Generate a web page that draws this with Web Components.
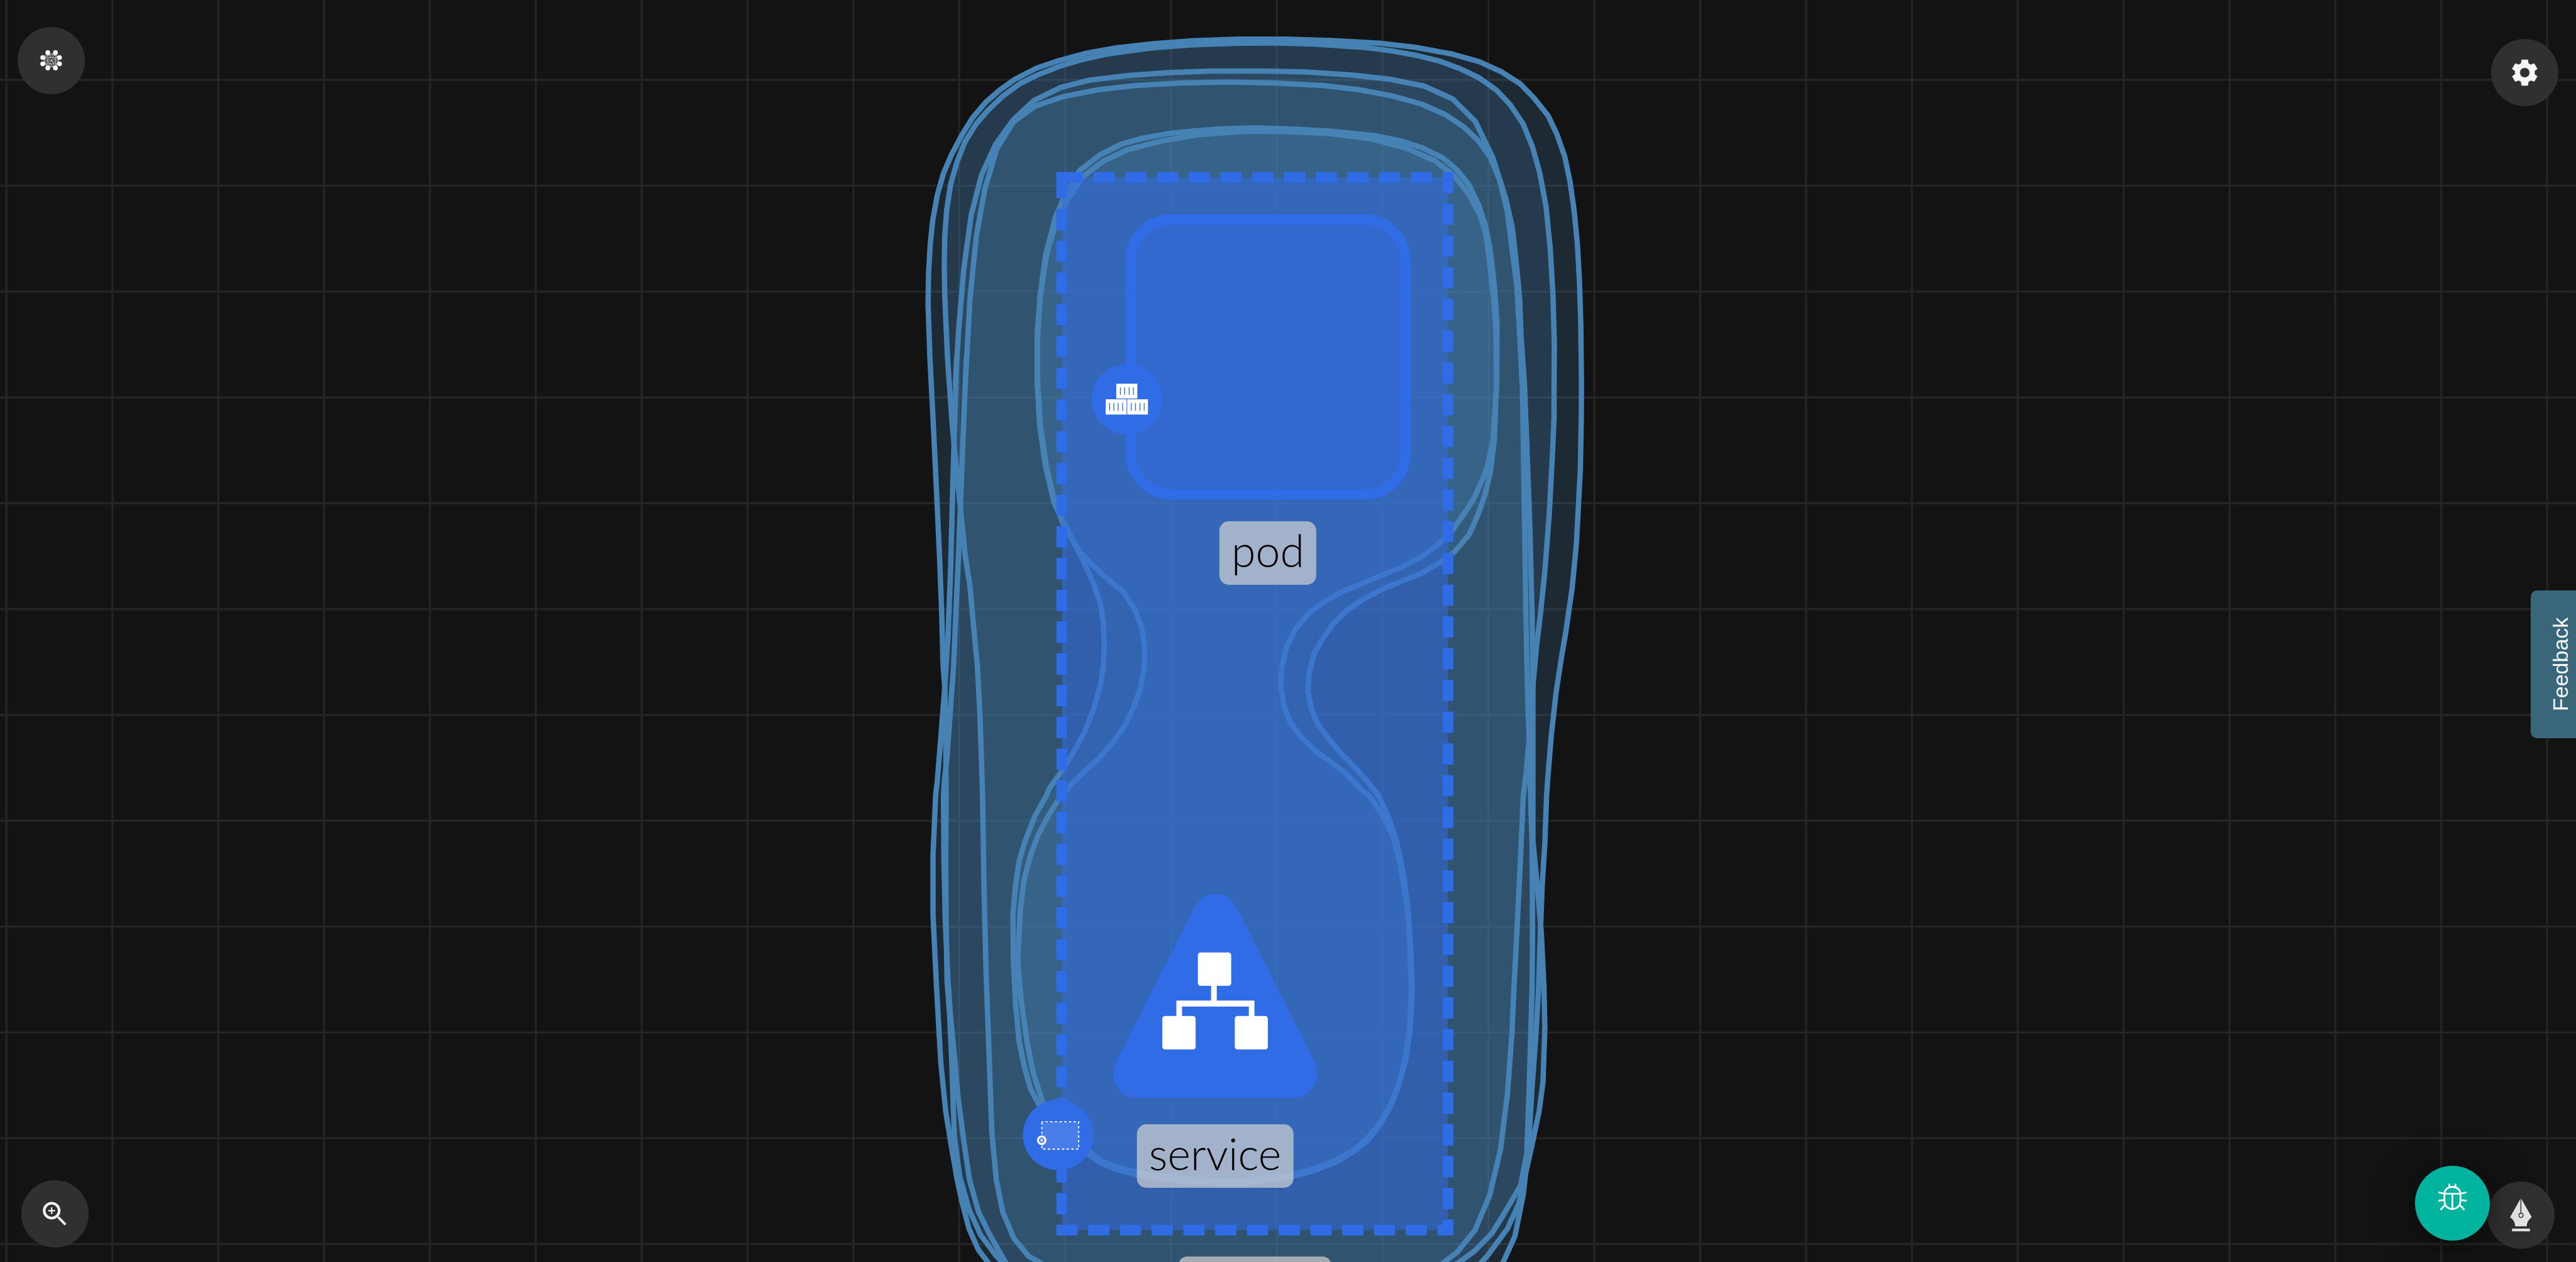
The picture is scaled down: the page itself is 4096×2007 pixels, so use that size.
<!DOCTYPE html>
<html lang="en">
<head>
<meta charset="utf-8">
<title>Cluster designer</title>
<style>
html, body { margin: 0; height: 100%; background: #131313; }
</style>
</head>
<body>
<designer-app></designer-app>

<template id="t-app">
<style>
:host { display: block; position: relative; height: 100vh; overflow: hidden; background: #131313; font-family: "Liberation Sans", Arial, sans-serif; }
.controls { position: absolute; inset: 0; display: flex; flex-direction: column; justify-content: space-between; box-sizing: border-box; padding: 43px 28px 21px; }
.row { display: flex; justify-content: space-between; align-items: flex-start; }
.row.bottom { align-items: flex-end; padding: 0 6px; }
.group { display: flex; align-items: flex-end; }
.settings { margin-top: 19px; }
.zoom { margin-bottom: 2px; }
.bug { margin: 0 -4px 13px 0; z-index: 1; }
feedback-tab { position: absolute; right: 0; top: 939px; }
</style>
<graph-canvas></graph-canvas>
<div class="controls">
  <div class="row">
    <round-button label="Layout">
      <svg class="mesh" viewBox="117 180 450 450"></svg>
    </round-button>
    <round-button class="settings" label="Settings">
      <svg viewBox="213 141 450 450"><path fill="#f5f7f7" fill-rule="evenodd" stroke="#f5f7f7" stroke-width="2" stroke-linejoin="round" d="M417 280H459L462 304Q470 308 478 313L501 305L522 341L503 356Q505 366 503 376L522 391L501 426L478 418Q470 424 462 427L459 452H417L414 427Q406 424 398 418L375 426L354 391L374 376Q372 366 374 356L354 341L375 305L398 313Q406 308 414 304ZM438 333A33 33 0 1 0 438 399A33 33 0 1 0 438 333Z"/></svg>
    </round-button>
  </div>
  <div class="row bottom">
    <round-button class="zoom" label="Zoom in">
      <svg viewBox="144 170 450 450" fill="none" stroke="#f5f7f7"><circle cx="346.500" cy="373.500" r="50" stroke-width="17.500"/><path stroke-width="9" d="M324 373.500H369M346.500 351V396"/><path fill="#f5f7f7" stroke="none" d="M387 414H399L445 461L433 472L387 426Z"/></svg>
    </round-button>
    <div class="group">
      <round-button class="bug" label="Report a bug" kind="accent">
        <svg viewBox="180 141 504 504" fill="none" stroke="#fff" stroke-width="12"><path d="M378 331V374C378 410 401 432 432 432S486 410 486 374V331C486 302 463 283 432 283S378 302 378 331Z"/><path d="M378 329H486M432 329V432M411.500 262V286M452.500 262V286M338 320L378 329M526 320L486 329M337 377L378 371M527 377L486 371M351 438L385 403M513 438L479 403"/></svg>
      </round-button>
      <round-button label="Design">
        <svg viewBox="666 249 450 450"><path fill="#e6e6e6" d="M887 366H894L963 488Q932 508 929 549H852Q850 508 818 488Z"/><path fill="#e6e3e6" d="M831 564H951V582H831Z"/><path stroke="#303030" stroke-width="6" d="M890.500 366V460"/><circle cx="891" cy="475.500" r="14" fill="#e6e6e6" stroke="#303030" stroke-width="6"/></svg>
      </round-button>
    </div>
  </div>
</div>
<feedback-tab>Feedback</feedback-tab>
</template>

<template id="t-button">
<style>
:host { display: block; flex: none; --size: 107px; --fill: #303030; --shadow: none; }
:host([kind="accent"]) { --size: 119px; --fill: #00b39f; --shadow: 0 6px 70px rgba(0, 0, 0, .45), 0 4px 16px rgba(0, 0, 0, .25); }
button { display: flex; width: var(--size); height: var(--size); padding: 0; border: 0; border-radius: 50%; background: var(--fill); box-shadow: var(--shadow); cursor: pointer; }
::slotted(svg) { display: block; width: 100%; height: 100%; }
</style>
<button type="button"><slot></slot></button>
</template>

<template id="t-feedback">
<style>
:host { display: block; }
button { display: flex; align-items: center; justify-content: center; box-sizing: border-box; width: 72px; height: 235px; padding: 0; border: 0; border-radius: 0 10px 10px 0; background: #396679; color: #f5f7f7; font: 34px/40px "Liberation Sans", Arial, sans-serif; writing-mode: vertical-rl; transform: rotate(180deg); cursor: pointer; }
span { display: block; margin-right: 22px; }
</style>
<button type="button"><span><slot></slot></span></button>
</template>

<template id="t-label">
<style>
:host { display: flex; align-items: center; justify-content: center; box-sizing: border-box; height: 101px; padding: 0 19px 8px; border-radius: 15px; background: rgba(211, 211, 211, .7); color: #000; font: 300 70px/92px Lato, "Open Sans", sans-serif; white-space: nowrap; }
</style>
<slot></slot>
</template>

<template id="t-canvas">
<style>
:host { display: block; position: relative; overflow: hidden; }
svg { display: block; width: 100%; height: auto; }
.hull { fill: #4682b4; fill-opacity: .2; stroke: #4682b4; stroke-width: 12; stroke-linejoin: round; }
node-label { position: absolute; transform: translateX(-50%); }
.pod { left: 49.22%; top: 41.28%; }
.service { left: 47.17%; top: 89.05%; }
</style>
<svg viewBox="0 0 5760 2823" role="img" aria-label="Namespace with a pod and a service">
  <g class="grid"></g>
  <g class="hulls"></g>
  <rect x="2374" y="396.500" width="864" height="2354.500" fill="#326ce5" fill-opacity=".5"/>
  <path d="M2374 396.500H3238V2751H2374Z" fill="none" stroke="#2f6ce5" stroke-width="24" stroke-dasharray="47.300 23.700"/>
  <rect x="2362" y="384.500" width="24" height="24" fill="#2f6ce5"/>
  <rect x="2528" y="491" width="615" height="615" rx="92" fill="#326ce5" fill-opacity=".5"/>
  <rect x="2528" y="491" width="615" height="615" rx="92" fill="none" stroke="#2f6ce5" stroke-width="23.500"/>
  <circle cx="2520" cy="893" r="79" fill="#2f6ce5"/>
  <g transform="translate(2400 780) scale(.3827)">
    <path fill="#fff" d="M251 204H374V291H251ZM189 295H311V384H189ZM315 295H436V384H315Z"/>
    <path stroke="#2f6ce5" stroke-width="5" stroke-linecap="round" d="M275 227V267M300 227V267M326 227V267M351 227V267M212 319V360M237 319V360M262 319V360M288 319V360M338 319V360M363 319V360M389 319V360M414 319V360"/>
  </g>
  <path fill="#2f6ce5" d="M2668.700 2033Q2686 1999.500 2718 1999.500Q2750 1999.500 2767 2033L2938 2372C2960 2415 2930 2455 2895 2455H2541C2502 2455 2475 2415 2497 2372Z"/>
  <g fill="#fff">
    <rect x="2678.500" y="2130" width="74.500" height="74.500" rx="6"/>
    <rect x="2599" y="2272" width="74.500" height="75" rx="6"/>
    <rect x="2761" y="2272" width="74" height="75" rx="6"/>
    <path d="M2708 2202H2720.700V2237.600H2805V2274H2792.400V2251H2643V2274H2630.400V2237.600H2708Z"/>
  </g>
  <circle cx="2366" cy="2538" r="79" fill="#2f6ce5"/>
  <g transform="translate(2280 2450) scale(.3333)">
    <rect x="149" y="176" width="247" height="184" fill="#fff" fill-opacity=".12" stroke="#fff" stroke-width="8" stroke-dasharray="16 15.500" stroke-dashoffset="8"/>
    <circle cx="148" cy="300" r="32" fill="#fff"/>
    <path fill="#2f6ce5" d="M148 281L163 288L167 304L157 318H139L129 304L133 288Z"/>
    <g fill="none" stroke="#fff" stroke-width="2.500"><circle cx="148" cy="300" r="9"/><path d="M148 286V314M134 300H162M138 290L158 310M158 290L138 310"/></g>
  </g>
  <rect x="2635" y="2810" width="342" height="141" rx="20" fill="#d3d3d3" fill-opacity=".7"/>
</svg>
<node-label class="pod">pod</node-label>
<node-label class="service">service</node-label>
</template>

<script>
const SVG = 'http://www.w3.org/2000/svg';
const stamp = (host, id) => {
  const root = host.attachShadow({ mode: 'open' });
  root.append(document.getElementById(id).content.cloneNode(true));
  return root;
};
const draw = (parent, tag, attrs) => {
  const el = document.createElementNS(SVG, tag);
  for (const key in attrs) el.setAttribute(key, attrs[key]);
  parent.append(el);
};

// Hull outlines are stored per tile of the canvas, each in the tile's own units.
const TILES = {
  nw: [2040, 60, 1.96, 1.96],
  ne: [2800, 60, 1.96, 1.96],
  mid: [2040, 800, 1.0182, 1.568],
  low: [2040, 1780, 1.0182, 1.5034]
};
const HULLS = [
  // widest at the top
  [['nw', '69,1215 71,1083 78,960 89,850 110,735 137,640 172,560 215,478 263,400 322,330 382,278 450,230 545,181 645,147 765,115 895,92 1055,74 1230,61 1430,54 1568,54'],
   ['ne', '150,54 350,60 560,72 715,90 870,118 995,153 1092,197 1175,250 1235,312 1297,390 1335,470 1370,570 1393,680 1410,800 1425,950 1434,1110 1440,1300 1443,1568'],
   ['mid', '1523,210 1521,390 1512,650 1502,810 1488,960 1478,1050 1466,1170 1455,1320 1447,1470'],
   ['low', '1444,0 1440,160 1434,300 1430,460 1426,640 1420,800 1411,980 1404,1150 1398,1250 1391,1340 1372,1480 1345,1568 1300,1660 205,1640 205,1568 190,1545 155,1475 129,1390 108,1280 96,1150 93,1040 90,900 85,740 79,620 77,420 76,220 77,0'],
   ['mid', '76,1320 74,1160 70,1080 67,900 62,700 56,500 48,240 40,0']],
  // second ring
  [['nw', '142,1175 140,1043 142,920 151,800 168,690 195,595 230,505 280,425 332,365 395,305 470,250 545,212 645,173 735,146 840,122 940,107 1055,92 1230,79 1430,72 1568,71'],
   ['ne', '150,72 280,76 500,91 615,106 715,124 820,150 915,185 995,224 1070,277 1132,343 1187,425 1228,525 1260,640 1288,790 1306,970 1318,1170 1324,1390 1323,1568'],
   ['mid', '1461,210 1458,320 1450,550 1440,750 1430,900 1422,1000 1413,1150 1405,1320 1398,1450'],
   ['low', '1391,0 1385,200 1377,440 1370,640 1365,800 1355,1000 1339,1190 1314,1345 1281,1460 1240,1535 1210,1568 1150,1640 340,1640 290,1568 265,1548 231,1487 206,1400 191,1290 181,1130 173,800 168,600 163,300 160,0'],
   ['mid', '154,1250 148,1080 140,950 131,800 120,690 111,550 103,430 91,240 80,0']],
  // third ring
  [['nw', '189,1568 202,1340 225,1065 258,825 303,650 365,515 440,410 533,323 650,266 780,233 940,214 1120,201 1310,194 1520,193'],
   ['ne', '30,193 235,198 435,211 605,230 755,260 878,316 978,415 1055,575 1112,755 1140,880 1156,1025 1172,1190 1178,1350 1193,1568'],
   ['mid', '1399,300 1406,600 1411,900 1413,1160 1413,1568'],
   ['low', '1413,150 1424,320 1432,460 1438,640 1440,780 1436,960 1427,1060 1410,1180 1393,1290 1381,1370 1355,1455 1310,1545 1250,1640 210,1640 172,1568 150,1525 129,1455 113,1365 102,1290 88,1170 76,1060 65,900 55,640 47,400 47,200 53,0'],
   ['mid', '57,1480 65,1330 73,1170 81,980 87,750 93,400 101,0']],
  // fourth ring
  [['nw', '232,1568 252,1200 280,920 318,710 370,535 445,415 540,347 665,305 815,276 980,257 1175,246 1380,242'],
   ['ne', '100,246 310,257 465,275 615,303 740,338 845,384 925,437 990,498 1045,575 1085,675 1118,810 1137,960 1160,1140 1170,1310 1183,1568'],
   ['mid', '1388,0 1391,300 1394,600 1397,900 1401,1200 1404,1320 1408,1568'],
   ['low', '1411,160 1412,460 1411,640 1407,850 1404,1000 1399,1200 1385,1310 1345,1410 1320,1470 1280,1530 1245,1568 1150,1640 240,1640 212,1568 178,1480 151,1400 130,1290 117,1160 103,1000 95,860 87,740 81,620 75,420 72,220 71,0'],
   ['mid', '73,1480 79,1400 86,1250 94,1080 99,900 105,700 111,460 115,300 123,0']],
  // inner rings around the two nodes
  [['nw', '547,1568 547,1350 560,1175 585,995 625,840 675,725 733,630 820,563 912,515 1010,488 1115,469 1230,456 1340,448 1460,444'],
   ['ne', '0,443 180,448 350,458 545,478 650,500 745,530 835,574 898,628 948,690 992,780 1022,870 1042,970 1061,1130 1073,1300 1072,1568'],
   ['mid', '1330,100 1325,290 1316,400 1304,480 1288,550 1268,620 1235,680 1205,715 1157,757 1080,805 1028,845 988,888 957,935 932,990 913,1045 903,1110 901,1170 908,1230 923,1285 947,1335 975,1385 1010,1440 1038,1490'],
   ['low', '1062,0 1082,65 1100,140 1112,215 1121,290 1129,390 1135,520 1138,660 1134,780 1123,890 1108,970 1090,1040 1065,1105 1036,1160 1005,1195 970,1227 915,1260 850,1285 760,1302 690,1302 620,1297 525,1279 475,1260 430,1235 350,1150 289,1040 269,985 255,910 243,825 235,700 230,550 229,400 235,300 243,220 257,150 280,65 305,0'],
   ['mid', '312,1510 340,1450 372,1370 393,1310 413,1230 428,1150 435,1080 437,1005 435,930 428,860 412,790 390,715 365,640 323,510 303,380 290,240 284,80']],
  [['nw', '549,1568 549,1350 562,1175 588,1000 632,850 680,760 745,658 835,590 945,538 1085,502 1250,474 1440,459'],
   ['ne', '0,458 150,459 340,468 515,490 675,532 800,587 885,652 950,735 998,825 1025,915 1045,1070 1058,1190 1069,1350 1070,1568'],
   ['mid', '1330,100 1322,290 1308,390 1280,490 1255,550 1225,615 1193,660 1157,700 1110,737 1050,775 980,820 938,855 902,897 873,950 852,1015 841,1085 839,1155 846,1220 861,1280 885,1330 917,1378 985,1455 1023,1515'],
   ['low', '1041,0 1070,65 1095,140 1108,215 1118,290 1128,390 1133,520 1136,660 1132,780 1121,890 1107,970 1088,1040 1064,1100 1034,1155 1003,1192 968,1222 913,1255 850,1278 760,1294 690,1294 620,1288 525,1270 475,1252 430,1228 365,1150 297,1030 275,930 261,825 248,690 240,550 246,380 254,285 267,210 285,135 310,65 338,0'],
   ['mid', '365,1490 428,1400 458,1345 484,1290 504,1225 519,1160 528,1085 529,1015 522,945 507,885 482,825 425,750 384,685 348,600 325,510 305,380 292,240 285,80']]
];
const outline = parts => 'M' + parts.flatMap(([tile, text]) => {
  const [ox, oy, sx, sy] = TILES[tile];
  return text.split(' ').map(pair => {
    const [x, y] = pair.split(',').map(Number);
    return (ox + x / sx).toFixed(1) + ' ' + (oy + y / sy).toFixed(1);
  });
}).join('L') + 'Z';

customElements.define('graph-canvas', class extends HTMLElement {
  constructor() {
    super();
    const root = stamp(this, 't-canvas');
    const grid = root.querySelector('.grid');
    const step = 236.7;
    let d = '';
    for (let x = 14.5; x < 5760; x += step) d += `M${x.toFixed(1)} 0V2823`;
    for (let y = 178.6; y < 2823; y += step) d += `M0 ${y.toFixed(1)}H5760`;
    draw(grid, 'path', { d, fill: 'none', stroke: '#1c1c1c', 'stroke-width': 6 });
    draw(grid, 'path', { d, fill: 'none', stroke: '#282828', 'stroke-width': 2.6 });
    const hulls = root.querySelector('.hulls');
    for (const parts of HULLS) draw(hulls, 'path', { d: outline(parts), class: 'hull' });
  }
});
customElements.define('node-label', class extends HTMLElement {
  constructor() { super(); stamp(this, 't-label'); }
});
customElements.define('round-button', class extends HTMLElement {
  constructor() { super(); stamp(this, 't-button'); }
  connectedCallback() {
    this.shadowRoot.querySelector('button').setAttribute('aria-label', this.getAttribute('label'));
  }
});
customElements.define('feedback-tab', class extends HTMLElement {
  constructor() { super(); stamp(this, 't-feedback'); }
});
customElements.define('designer-app', class extends HTMLElement {
  constructor() {
    super();
    const mesh = stamp(this, 't-app').querySelector('.mesh');
    const dots = [[319, 351], [370, 351], [397, 384], [397, 426], [370, 454], [319, 454], [285, 426], [285, 384]];
    let d = '';
    dots.forEach(([x, y], i) => dots.slice(i + 2).forEach(([u, v]) => { d += `M${x} ${y}L${u} ${v}`; }));
    draw(mesh, 'path', { d, stroke: '#f5f7f7', 'stroke-width': 2.5 });
    for (const [cx, cy] of dots) draw(mesh, 'circle', { cx, cy, r: 16, fill: '#f5f7f7' });
  }
});
</script>
</body>
</html>
